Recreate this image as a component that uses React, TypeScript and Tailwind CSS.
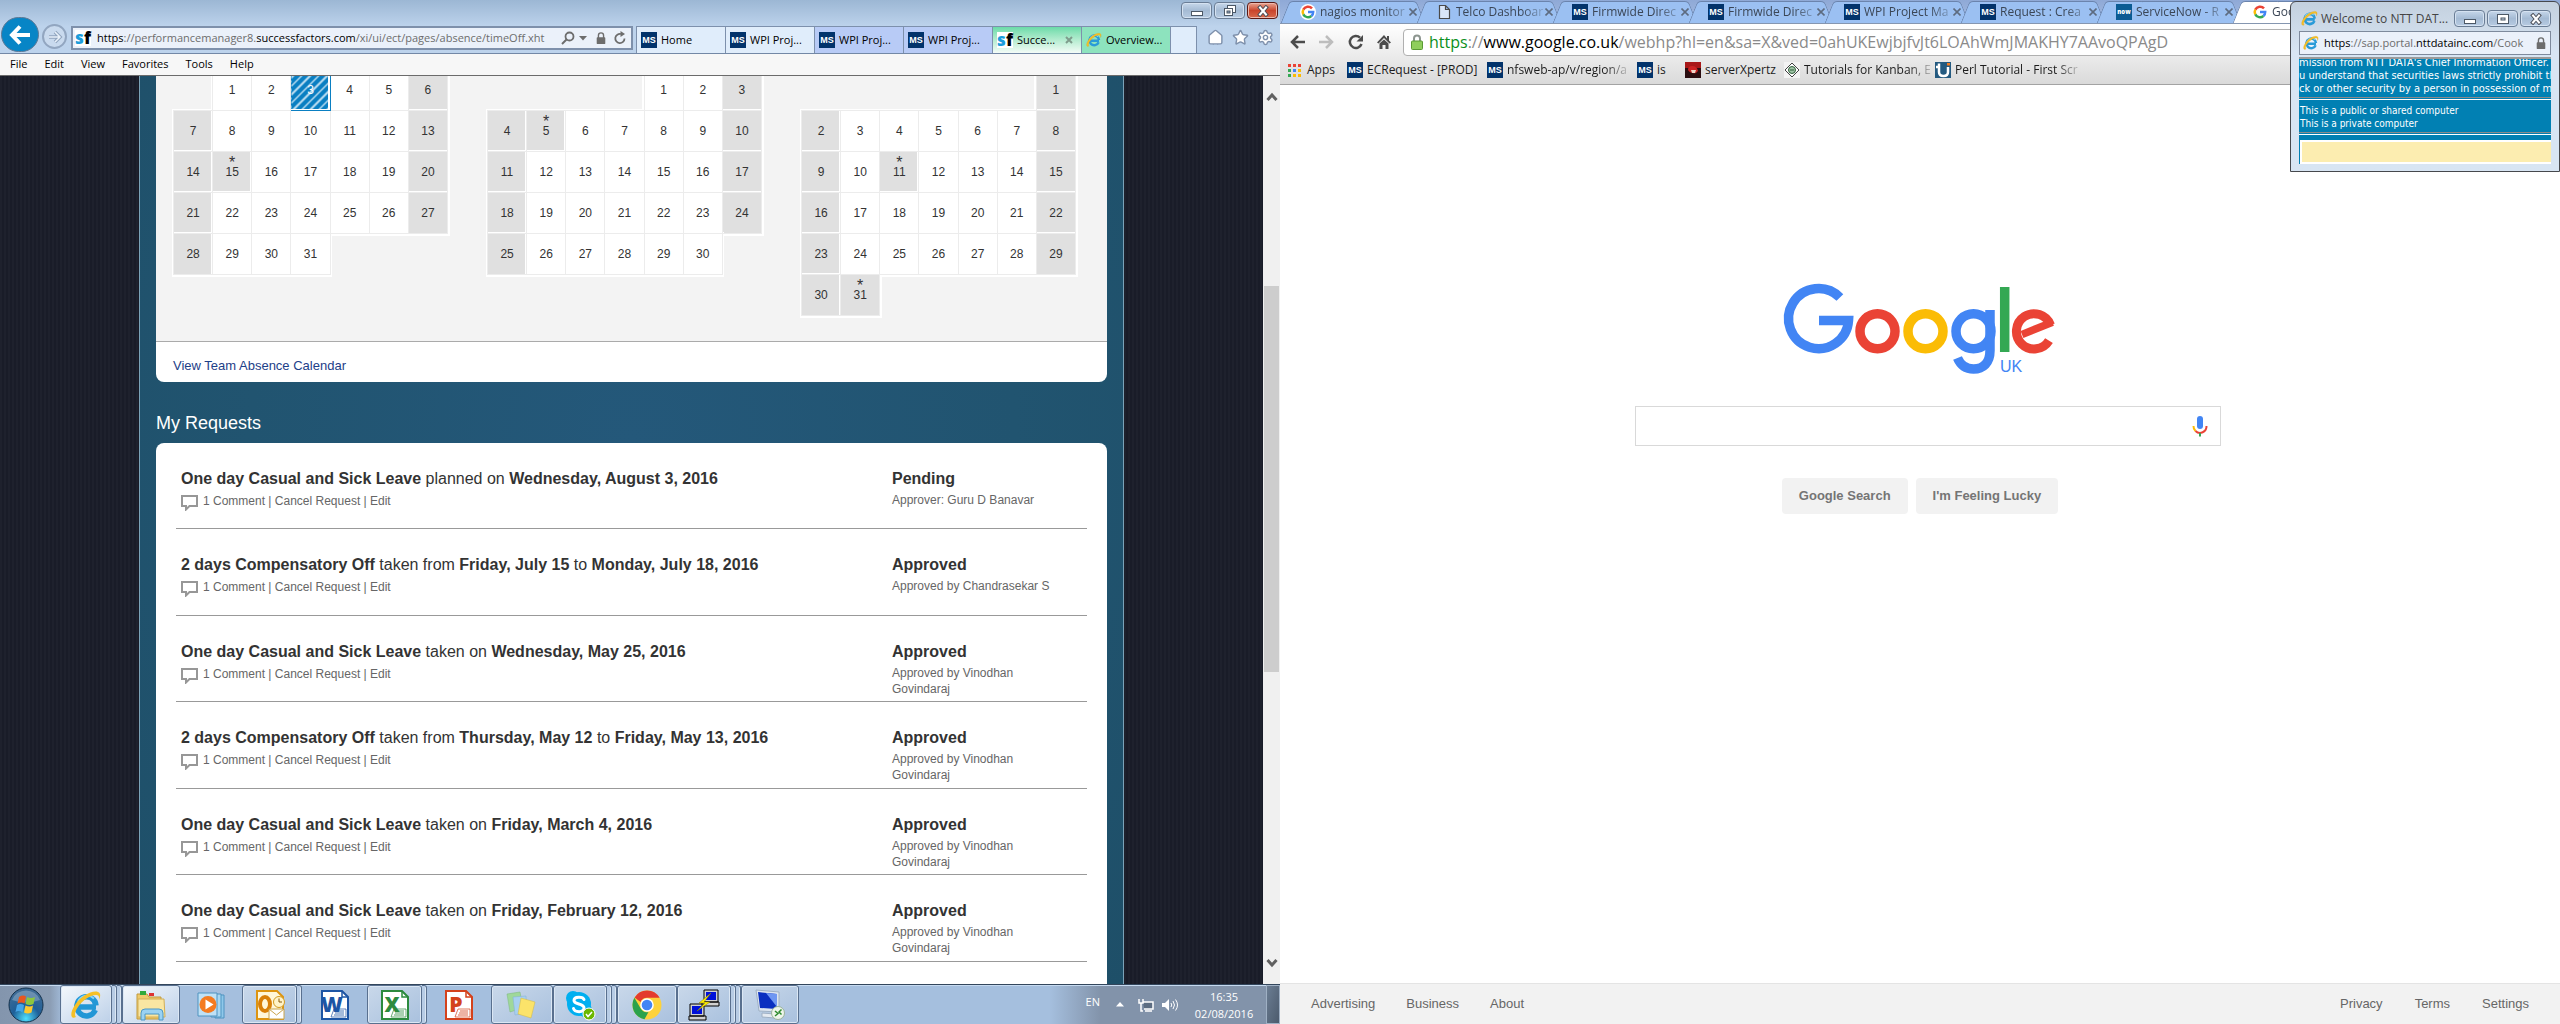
import React from "react";
import { Home, Settings, Star } from "lucide-react";

const UI = "font-['Open_Sans','Noto_Sans',sans-serif]";

/* ---------- shared icons ---------- */

function IeIcon({ className }: { className: string }) {
  return (
    <svg viewBox="0 0 32 32" className={className} aria-hidden="true">
      <path d="M26 17.5H9.5M25.3 20.5A9.6 9.6 0 1 1 26 16" fill="none" stroke="#2a9bd8" strokeWidth="5" />
      <path d="M24 9.5A9.6 9.6 0 0 0 7.5 14" fill="none" stroke="#7fd0f5" strokeWidth="2" />
      <path d="M6 28C1 31-1 25 5 16 11 7 22 1 28 3c3 1 2.500 5 1 8 .5-3 0-5-3-5C20 6 12 12 8 18c-3 4.500-4 8-2 10z" fill="#f6c026" stroke="#d99a12" strokeWidth=".5" />
    </svg>
  );
}

function MsIcon() {
  return (
    <span className="flex size-4 shrink-0 items-center justify-center bg-[#02336b] font-['Liberation_Sans',sans-serif] text-[9px] leading-none font-bold text-white">
      MS
    </span>
  );
}

function SfIcon() {
  return (
    <span className="flex size-4 shrink-0 items-center justify-center bg-white font-['Open_Sans',sans-serif] text-[17px] leading-4 font-extrabold">
      <span className="text-[#1b9ddb]">s</span>
      <span className="text-black">f</span>
    </span>
  );
}

function GIcon() {
  return (
    <svg viewBox="0 0 16 16" className="size-4 shrink-0 rounded-full bg-white" aria-hidden="true">
      <g fill="none" strokeWidth="2.500">
        <path d="M12 4.400A5.300 5.300 0 0 0 3.300 5.600" stroke="#ea4335" />
        <path d="M3.300 5.600a5.300 5.300 0 0 0 0 4.800" stroke="#fbbc05" />
        <path d="M3.300 10.400A5.300 5.300 0 0 0 11.400 12" stroke="#34a853" />
        <path d="M11.400 12A5.300 5.300 0 0 0 13.200 8H8" stroke="#4285f4" />
      </g>
    </svg>
  );
}

function LockIcon({ className }: { className: string }) {
  return (
    <svg viewBox="0 0 12 14" className={className} aria-hidden="true">
      <path d="M3 7V4a3 3 0 0 1 6 0v3" fill="none" stroke="currentColor" strokeWidth="1.600" />
      <rect x="1" y="6" width="10" height="8" rx="1" fill="currentColor" />
    </svg>
  );
}

/* ---------- Internet Explorer ---------- */

function WindowButton({ label, danger, children }: { label: string; danger?: boolean; children: React.ReactNode }) {
  return (
    <button
      aria-label={label}
      className={
        danger
          ? "flex h-[17px] w-[31px] items-center justify-center rounded-sm border border-[#5b1a14] bg-linear-to-b from-[#e8a491] via-[#c9452c] to-[#d8684a] shadow-[inset_0_0_0_1px_#eeb9ac]"
          : "flex h-[17px] w-[31px] items-center justify-center rounded-sm border border-[#6a7d95] bg-linear-to-b from-[#c6d7ea] via-[#a5bbd4] to-[#b7cbe2] shadow-[inset_0_0_0_1px_#d5e2f1]"
      }
    >
      <svg viewBox="0 0 14 12" className="h-3 w-3.5" aria-hidden="true">
        {children}
      </svg>
    </button>
  );
}

const minimizeGlyph = <rect x="1.500" y="6.500" width="11" height="4" fill="#fff" stroke="#4c5866" />;
const restoreGlyph = (
  <g fill="#fff" stroke="#4c5866">
    <rect x="4.500" y=".5" width="8" height="7" />
    <rect x="1.500" y="3.500" width="8" height="7" />
    <rect x="4" y="6" width="3" height="2" fill="#8fa5bf" />
  </g>
);
const maximizeGlyph = (
  <g fill="#fff" stroke="#4c5866">
    <rect x="1.500" y="1.500" width="11" height="9" />
    <rect x="5" y="5" width="4" height="2" fill="#c9d6e6" />
  </g>
);
const closeGlyph = (
  <g strokeLinecap="square">
    <path d="M4 2.500 10 9.500M10 2.500 4 9.500" stroke="#4c4f58" strokeWidth="4" />
    <path d="M4 2.500 10 9.500M10 2.500 4 9.500" stroke="#fff" strokeWidth="2" />
  </g>
);

function IeTab({ icon, label, tone, closable }: { icon: React.ReactNode; label: string; tone: string; closable?: boolean }) {
  return (
    <button className={`flex w-[89px] shrink-0 items-center gap-1 border-r border-[#7d90ac] pl-1 text-[11px] whitespace-nowrap text-black ${tone}`}>
      {icon}
      <span>{label}</span>
      {closable && (
        <svg viewBox="0 0 8 8" className="ml-1.5 size-2" aria-hidden="true">
          <path d="M1 1l6 6M7 1 1 7" stroke="#7f9c8c" strokeWidth="2" />
        </svg>
      )}
    </button>
  );
}

function IeChrome() {
  return (
    <header className={`${UI} shrink-0`}>
      <div className="flex h-[54px] border-b border-[#7388a6] bg-linear-to-b from-[#9cb7d4] to-[#bdd3ec] to-50%">
        <div className="flex items-end pb-[1px] pl-[1px]">
          <button aria-label="Back" className="flex h-[35px] w-[38px] items-center justify-center rounded-full border border-[#5f7a96] bg-[#0785c6]">
            <svg viewBox="0 0 22 22" className="size-[22px]" aria-hidden="true">
              <path d="M21 11H3M11 2.500 3 11l8 8.500" fill="none" stroke="#fff" strokeWidth="4" />
            </svg>
          </button>
          <button aria-label="Forward" className="mb-[3px] ml-[3px] flex size-[25px] items-center justify-center rounded-full border-2 border-[#92a6c0] bg-[#c9daee]">
            <svg viewBox="0 0 16 16" className="size-4" aria-hidden="true">
              <path d="M2 8h10M8 3l5 5-5 5" fill="none" stroke="#8fa3bd" strokeWidth="3.500" />
              <path d="M2 8h10M8 3l5 5-5 5" fill="none" stroke="#e9f1fa" strokeWidth="1.500" />
            </svg>
          </button>
        </div>
        <div className="mt-[26px] ml-1 flex h-6 min-w-0 flex-1 items-center border-2 border-[#7e90ab] bg-[#ebf1fa] pl-0.5 text-[11px] text-[#6d6d6d]">
          <SfIcon />
          <div className="ml-1.5 min-w-0 flex-1 whitespace-nowrap">
            <span className="text-black">https</span>://performancemanager8.<span className="text-black">successfactors.com</span>/xi/ui/ect/pages/absence/timeOff.xht
          </div>
          <svg viewBox="0 0 14 14" className="size-3.5 shrink-0" aria-hidden="true">
            <circle cx="8.500" cy="5.500" r="4" fill="none" stroke="#6d6d6d" strokeWidth="1.800" />
            <path d="M5.500 8.500 1 13" stroke="#6d6d6d" strokeWidth="2" />
          </svg>
          <svg viewBox="0 0 8 5" className="ml-1 h-[5px] w-2 shrink-0" aria-hidden="true">
            <path d="M0 0h8L4 4.500z" fill="#6d6d6d" />
          </svg>
          <LockIcon className="ml-2 size-3 shrink-0 text-[#6d6d6d]" />
          <svg viewBox="0 0 14 14" className="mr-1 ml-1.5 size-3.5 shrink-0" aria-hidden="true">
            <path d="M11.500 7.500A4.600 4.600 0 1 1 8 3" fill="none" stroke="#6d6d6d" strokeWidth="1.800" />
            <path d="M7.500 0 12 3 7.500 6z" fill="#6d6d6d" />
          </svg>
        </div>
        <nav className="mt-[26px] ml-[3px] flex border-t border-l border-[#7d90ac]">
          <IeTab icon={<MsIcon />} label="Home" tone="bg-[#e0edfb]" />
          <IeTab icon={<MsIcon />} label="WPI Proj..." tone="bg-[#e0edfb]" />
          <IeTab icon={<MsIcon />} label="WPI Proj..." tone="bg-[#b8cbf6]" />
          <IeTab icon={<MsIcon />} label="WPI Proj..." tone="bg-[#b8cbf6]" />
          <IeTab icon={<SfIcon />} label="Succe..." tone="bg-linear-to-b from-[#69dba9] to-[#f4fcf8]" closable />
          <IeTab icon={<IeIcon className="size-4 shrink-0" />} label="Overview..." tone="bg-[#8de3be]" />
          <button aria-label="New tab" className="w-[26px] border-r border-[#7d90ac] bg-[#e0edfb]" />
        </nav>
        <div className="flex w-[83px] flex-col items-end justify-between pt-[2px] pr-[2px]">
          <div className="-ml-4 flex gap-[2px]">
            <WindowButton label="Minimize">{minimizeGlyph}</WindowButton>
            <WindowButton label="Restore">{restoreGlyph}</WindowButton>
            <WindowButton label="Close" danger>{closeGlyph}</WindowButton>
          </div>
          <div className="mb-[7px] flex gap-2 pr-1 text-[#7e90ab]">
            <button aria-label="Home"><Home className="size-[17px] fill-white" strokeWidth={2} /></button>
            <button aria-label="Favorites"><Star className="size-[17px] fill-white" strokeWidth={2} /></button>
            <button aria-label="Tools"><Settings className="size-[17px] fill-white" strokeWidth={2} /></button>
          </div>
        </div>
      </div>
      <nav className="flex h-[22px] items-center gap-[17px] border-b border-[#6b6b6b] bg-[#f7f7f7] pl-2.5 text-[11px] text-black">
        {["File", "Edit", "View", "Favorites", "Tools", "Help"].map((item) => (
          <button key={item}>{item}</button>
        ))}
      </nav>
    </header>
  );
}

/* ---------- absence calendar ---------- */

type Month = { offset: number; days: number; holidays: number[]; selected?: number };

const months: Month[] = [
  { offset: 1, days: 31, holidays: [15], selected: 3 },
  { offset: 4, days: 30, holidays: [5] },
  { offset: 6, days: 31, holidays: [11, 31] },
];

function Calendar({ month }: { month: Month }) {
  const weeks = Math.ceil((month.offset + month.days) / 7);
  return (
    <table className="w-[275px] table-fixed border-collapse text-center text-xs text-[#333]">
      <tbody>
        {Array.from({ length: weeks }, (_, week) => (
          <tr key={week} className="h-[41px]">
            {Array.from({ length: 7 }, (_, col) => {
              const day = week * 7 + col - month.offset + 1;
              if (day < 1 || day > month.days) return <td key={col} className="p-0" />;
              const holiday = month.holidays.includes(day);
              if (day === month.selected) {
                return (
                  <td key={col} className="border border-[#0a7fc2] bg-[repeating-linear-gradient(135deg,#0a7fc2_0_4px,#b9dcf0_4px_6px)] p-0 text-white">
                    {day}
                  </td>
                );
              }
              const grey = holiday || col === 0 || col === 6;
              return (
                <td key={col} className={`border border-[#ececec] p-0 shadow-[0_0_0_2px_white] ${grey ? "bg-[#e0e0e0]" : "bg-white"}`}>
                  <span className="relative">
                    {holiday && <span className="absolute -top-2.5 left-1/2 -translate-x-1/2 text-base leading-none">*</span>}
                    {day}
                  </span>
                </td>
              );
            })}
          </tr>
        ))}
      </tbody>
    </table>
  );
}

/* ---------- requests ---------- */

type Request = { kind: string; verb: string; from: string; to?: string; status: string; approver: string };

const requests: Request[] = [
  { kind: "One day Casual and Sick Leave", verb: "planned on", from: "Wednesday, August 3, 2016", status: "Pending", approver: "Approver: Guru D Banavar" },
  { kind: "2 days Compensatory Off", verb: "taken from", from: "Friday, July 15", to: "Monday, July 18, 2016", status: "Approved", approver: "Approved by Chandrasekar S" },
  { kind: "One day Casual and Sick Leave", verb: "taken on", from: "Wednesday, May 25, 2016", status: "Approved", approver: "Approved by Vinodhan Govindaraj" },
  { kind: "2 days Compensatory Off", verb: "taken from", from: "Thursday, May 12", to: "Friday, May 13, 2016", status: "Approved", approver: "Approved by Vinodhan Govindaraj" },
  { kind: "One day Casual and Sick Leave", verb: "taken on", from: "Friday, March 4, 2016", status: "Approved", approver: "Approved by Vinodhan Govindaraj" },
  { kind: "One day Casual and Sick Leave", verb: "taken on", from: "Friday, February 12, 2016", status: "Approved", approver: "Approved by Vinodhan Govindaraj" },
];

function RequestRow({ request }: { request: Request }) {
  return (
    <li className="flex border-b border-[#999] pt-[26px] pl-[5px] text-[#333]">
      <div className="min-w-0 flex-1">
        <h3 className="text-base leading-5">
          <b>{request.kind}</b> {request.verb} <b>{request.from}</b>
          {request.to && (
            <>
              {" "}to <b>{request.to}</b>
            </>
          )}
        </h3>
        <p className="mt-1 flex text-xs leading-4 text-[#666]">
          <svg viewBox="0 0 17 16" className="mt-0.5 mr-[5px] h-4 w-[17px]" aria-hidden="true">
            <path d="M1 1h15v10H8.500L5 14.500V11H1z" fill="none" stroke="#979797" strokeWidth="2" />
          </svg>
          <span>
            <a href="#comment">1 Comment</a> | <a href="#cancel">Cancel Request</a> | <a href="#edit">Edit</a>
          </span>
        </p>
      </div>
      <div className="w-[195px] pr-8">
        <p className="text-base leading-5 font-bold">{request.status}</p>
        <p className="mt-[3px] text-xs leading-4 text-[#666]">{request.approver}</p>
      </div>
    </li>
  );
}

function AbsencePage() {
  return (
    <div className="flex min-h-0 flex-1 font-['Liberation_Sans',Arial,sans-serif]">
      <main className="flex min-w-0 flex-1 overflow-hidden bg-[#191c28] bg-[repeating-linear-gradient(90deg,#ffffff06_0_2px,transparent_2px_4px)] px-[139px]">
        <div className="flex min-w-0 flex-1 flex-col border-x border-[#7ba3b8] bg-[radial-gradient(ellipse_at_50%_40%,#24587a_0%,#215470_55%,#1e4f68_100%)] px-4">
          <section className="shrink-0 overflow-hidden rounded-b-lg bg-white">
            <div className="flow-root h-[266px] border-b border-[#aaa] bg-[#f3f3f3]">
              <div className="-mt-[7px] flex items-start justify-between pr-[31px] pl-[17px]">
                {months.map((month) => (
                  <Calendar key={month.offset} month={month} />
                ))}
              </div>
            </div>
            <div className="flex h-10 items-center pt-2 pl-[17px] text-[13px] text-[#1d4088]">
              <a href="#team">View Team Absence Calendar</a>
            </div>
          </section>
          <h2 className="mt-[29px] shrink-0 text-lg leading-6 text-white">My Requests</h2>
          <ul className="mt-2 grid min-h-0 flex-1 auto-rows-[86px_87px] content-start rounded-t-lg bg-white px-5">
            {requests.map((request) => (
              <RequestRow key={request.from} request={request} />
            ))}
          </ul>
        </div>
      </main>
      <div className="flex w-[17px] shrink-0 flex-col items-center bg-[#f0f0f0] pt-4 pb-4" aria-hidden="true">
        <svg viewBox="0 0 12 10" className="h-2.5 w-3">
          <path d="M1.500 8 6 3l4.500 5" fill="none" stroke="#606060" strokeWidth="3" />
        </svg>
        <div className="mt-[184px] h-[386px] w-[15px] bg-[#cdcdcd]" />
        <svg viewBox="0 0 12 10" className="mt-auto h-2.5 w-3">
          <path d="M1.500 2 6 7l4.500-5" fill="none" stroke="#606060" strokeWidth="3" />
        </svg>
      </div>
    </div>
  );
}

/* ---------- taskbar ---------- */

function TaskButton({ label, width, open, stack = 0, active, children }: { label: string; width: string; open?: boolean; stack?: number; active?: boolean; children: React.ReactNode }) {
  return (
    <div className="flex">
      <button
        aria-label={label}
        className={`flex items-center justify-center ${width} ${
          open
            ? `rounded-[3px] border border-[#59708f] shadow-[inset_0_0_0_1px_#dbe7f4] ${active ? "bg-linear-to-br from-[#f4f8fc] to-[#bcd0e8]" : "bg-linear-to-br from-[#c9d8ea] to-[#a9c1de]"}`
            : ""
        }`}
      >
        <svg viewBox="0 0 32 32" className="size-8" aria-hidden="true">
          {children}
        </svg>
      </button>
      {Array.from({ length: stack }, (_, i) => (
        <span key={i} className="w-[5px] rounded-r-[3px] border-y border-r border-[#59708f] bg-[#b7cce5] shadow-[inset_-1px_0_0_#dbe7f4]" />
      ))}
    </div>
  );
}

function OfficeIcon({ color, letter }: { color: string; letter: string }) {
  return (
    <>
      <path d="M3 2h20l6 6v22H3z" fill="#fff" stroke={color} strokeWidth="2" />
      <path d="M23 2v6h6" fill="none" stroke={color} strokeWidth="1.500" />
      <path d="M15 20h12v8H12z" fill="#fdfdfd" stroke={color} strokeWidth=".7" />
      <path d="M17 22h8M16 24h9M15 26h10" stroke={color} strokeWidth=".8" />
      <text x="13" y="23" textAnchor="middle" fontSize="21" fontWeight="800" fontFamily="Open Sans" fill={color}>{letter}</text>
    </>
  );
}

function Taskbar() {
  return (
    <footer className={`${UI} flex h-10 shrink-0 border-t border-[#33465c] bg-[linear-gradient(90deg,#8395ad_0,#8b9db4_50px,#a5bfde_64px,#a5bfde_82%,#8293aa_86%)] shadow-[inset_0_1px_0_#c6daf0]`}>
      <button aria-label="Start" className="flex w-[60px] items-center pl-2">
        <svg viewBox="0 0 36 36" className="size-9" aria-hidden="true">
          <defs>
            <radialGradient id="orb" cx="50%" cy="90%" r="80%">
              <stop offset="0" stopColor="#4fe0ff" />
              <stop offset=".5" stopColor="#1e5f98" />
              <stop offset="1" stopColor="#3d6b96" />
            </radialGradient>
          </defs>
          <circle cx="18" cy="18" r="17" fill="url(#orb)" stroke="#16324c" />
          <path d="M4 13A15 15 0 0 1 32 13Q18 18 4 13z" fill="#ffffff40" />
          <path d="M11 10q4-2.500 7-.5l-1.500 7q-3.500-2-7 0z" fill="#e8571f" />
          <path d="M19 10q4 2 8 0l-1.500 7q-4 2-8 0z" fill="#8cc63e" />
          <path d="M9 18q3.500-2 7 0l-1.500 7.500q-3.500-2.500-7-.5z" fill="#45a5e8" />
          <path d="M17.500 18.500q4 2 7.500 0l-1.500 7q-4 2-7.500 0z" fill="#fdc82f" />
        </svg>
      </button>
      <TaskButton label="Internet Explorer" width="w-[52px]" open stack={2} active>
        <path d="M26 18H9.500M25.300 21A9.600 9.600 0 1 1 26 16.500" fill="none" stroke="#2397d6" strokeWidth="5.500" />
        <path d="M24 9.500A10 10 0 0 0 8 13" fill="none" stroke="#8ad5f8" strokeWidth="2" />
        <path d="M6 28C1 31-1 25 5 16 11 7 22 1 28 3c3 1 2.500 5 1 8 .5-3 0-5-3-5C20 6 12 12 8 18c-3 4.500-4 8-2 10z" fill="#f6c026" />
      </TaskButton>
      <TaskButton label="File Explorer" width="w-[58px]" open active>
        <path d="M2 5h10l2 3h12v22H2z" fill="#eecb6c" stroke="#c19a3c" />
        <path d="M5 2h6v4H5z" fill="#2faa3c" />
        <path d="M14 4h5v3h-5z" fill="#d33" />
        <path d="M3 10h26l1 18H3z" fill="#f9e6a2" stroke="#d2ae56" />
        <path d="M6 31v-7q0-4 4-4h14q4 0 4 4v7h-4v-6H10v6z" fill="#9ad2f2" stroke="#4d98c6" />
      </TaskButton>
      <TaskButton label="Media Player" width="w-[62px]">
        <path d="M20 6h9v23h-9z" fill="#8fc8ea" stroke="#4f93c0" />
        <path d="M16 5h10v23H16z" fill="#a9d7f1" stroke="#4f93c0" />
        <path d="M3 4h19v23H3z" fill="#bfe1f5" stroke="#4f93c0" />
        <circle cx="13" cy="15.500" r="8.500" fill="#f47b20" />
        <path d="M10.500 10.500v10l8-5z" fill="#fff" />
      </TaskButton>
      <TaskButton label="Outlook" width="w-[55px]" open stack={1}>
        <path d="M3 2h20l6 6v22H3z" fill="#fff6d8" stroke="#dd9410" strokeWidth="2" />
        <ellipse cx="11" cy="15" rx="5" ry="7" fill="none" stroke="#d97f08" strokeWidth="4" />
        <path d="M15 20h15v10H15z" fill="#fff" stroke="#c9a44d" />
        <path d="M15 20l7.500 6 7.500-6" fill="none" stroke="#c9a44d" />
        <circle cx="25" cy="13" r="5.500" fill="#fff3c8" stroke="#d29a22" />
        <path d="M25 9.500V13h3" fill="none" stroke="#8b5a0a" />
      </TaskButton>
      <TaskButton label="Word" width="w-[65px]">
        <OfficeIcon color="#1c55a4" letter="W" />
      </TaskButton>
      <TaskButton label="Excel" width="w-[55px]" open stack={1}>
        <OfficeIcon color="#2c8a3e" letter="X" />
      </TaskButton>
      <TaskButton label="PowerPoint" width="w-[64px]">
        <OfficeIcon color="#d4421c" letter="P" />
      </TaskButton>
      <TaskButton label="Sticky Notes" width="w-[62px]" open>
        <path d="M1 5l13-2 3 16-13 4z" fill="#9fd89a" stroke="#7cb87a" strokeWidth=".5" />
        <path d="M7 8l13-1 1 17-12 2z" fill="#a8d0f0" stroke="#83afd3" strokeWidth=".5" />
        <path d="M15 9l14 4-4 16-13-4z" fill="#fbe36a" stroke="#d3b840" strokeWidth=".5" />
      </TaskButton>
      <TaskButton label="Skype" width="w-[54px]" open stack={2}>
        <g fill="#00aff0">
          <circle cx="15" cy="15" r="12" />
          <circle cx="9" cy="9" r="7" />
          <circle cx="21" cy="21" r="7" />
        </g>
        <path d="M20 10.500C19 7.500 10 7 10 11.500s10 2.500 10 7.500-9.500 4.500-10.500.5" fill="none" stroke="#fff" strokeWidth="3" strokeLinecap="round" />
        <circle cx="25" cy="25" r="6" fill="#6bb700" stroke="#fff" />
        <path d="M22 25l2 2.500 4-4.500" fill="none" stroke="#fff" strokeWidth="1.500" />
      </TaskButton>
      <TaskButton label="Chrome" width="w-[60px]" open>
        <circle cx="16" cy="16" r="14.500" fill="#fdd23b" />
        <path d="M16 1.500A14.500 14.500 0 0 1 28.600 8.800H16A7.200 7.200 0 0 0 9.500 13L3.600 8.500A14.500 14.500 0 0 1 16 1.500z" fill="#e33b2e" />
        <path d="M3.400 8.800 9.700 19.600A7.200 7.200 0 0 0 17.500 23L13.500 30.300A14.500 14.500 0 0 1 3.400 8.800z" fill="#2ba24c" />
        <circle cx="16" cy="16" r="6.800" fill="#fff" />
        <circle cx="16" cy="16" r="5.300" fill="#4285f4" />
      </TaskButton>
      <TaskButton label="PuTTY" width="w-[54px]" open stack={2}>
        <g fill="#d0d0d0" stroke="#000">
          <path d="M16 1h14v12H16zM14 13h17v4H14zM2 15h14v12H2zM1 27h17v4H1z" />
        </g>
        <path d="M18 3h10v8H18zM4 17h10v8H4z" fill="#0010d8" />
        <path d="M23 4l-12 10h6L9 22l13-9h-6z" fill="#ffef00" stroke="#8a7f00" strokeWidth=".5" />
      </TaskButton>
      <TaskButton label="Remote Desktop" width="w-[58px]" open>
        <path d="M2 1l23 2v20L5 22z" fill="#dde6f0" stroke="#9fb0c4" />
        <path d="M4 3l19 2v15L6 19z" fill="#0a2fc0" />
        <path d="M12 4l11 1v13z" fill="#6f97f2" />
        <path d="M8 24l13 1v4L8 28z" fill="#e4eaf1" stroke="#9fb0c4" />
        <circle cx="24" cy="24" r="6.500" fill="#eef5ea" stroke="#9ab39a" />
        <path d="M21 22l3 2.500-3 2.500M27.500 20.500 25 23l2.500 2.500" fill="none" stroke="#2e8b2e" strokeWidth="1.500" />
      </TaskButton>
      <div className="ml-auto flex items-center text-[11px] leading-[17px] text-white">
        <span className="pb-1.5">EN</span>
        <svg viewBox="0 0 8 5" className="ml-4 h-[5px] w-2" aria-hidden="true">
          <path d="M4 0l4 4.500H0z" fill="#fff" />
        </svg>
        <svg viewBox="0 0 16 14" className="ml-3.5 h-3.5 w-4" aria-hidden="true">
          <path d="M5 4h10v7H6" fill="#5d6d82" stroke="#fff" strokeWidth="1.500" />
          <path d="M1 1v4h4V1M3 5v8h2M7 13h7" fill="none" stroke="#fff" strokeWidth="1.500" />
        </svg>
        <svg viewBox="0 0 16 14" className="ml-2 h-3.5 w-4" aria-hidden="true">
          <path d="M0 5h3l4-4v12L3 9H0z" fill="#fff" />
          <path d="M9 5q1.500 2 0 4M11 3q3 4 0 8M13.500 1.500q4 5.500 0 11" fill="none" stroke="#fff" />
        </svg>
        <div className="ml-3.5 w-[64px] text-center">
          <div>16:35</div>
          <div>02/08/2016</div>
        </div>
        <button aria-label="Show desktop" className="ml-2.5 h-full w-[14px] border border-[#9fb0c4] bg-linear-to-br from-[#6b7d93] to-[#4c5b6d]" />
      </div>
    </footer>
  );
}

/* ---------- Chrome ---------- */

const FADE = "[mask-image:linear-gradient(90deg,#000_75%,#0003)]";

function PageIcon() {
  return (
    <svg viewBox="0 0 16 16" className="size-4 shrink-0" aria-hidden="true">
      <path d="M3.500 1.500h6l4 4v9h-10zM9.500 1.500v4h4" fill="#d9e6f8" stroke="#4a4a4a" strokeWidth="1.200" />
    </svg>
  );
}

function NowIcon() {
  return (
    <span className="flex size-4 shrink-0 items-center justify-center bg-[#0b5b93] text-[6px] leading-none font-extrabold text-white">now</span>
  );
}

function ChromeTab({ icon, label, active }: { icon: React.ReactNode; label: string; active?: boolean }) {
  return (
    <div
      className={`relative isolate flex w-[136px] shrink-0 items-center pl-[15px] before:absolute before:inset-y-0 before:left-0 before:-z-10 before:w-2/3 before:-skew-x-[22deg] before:rounded-tl-[4px] before:border-t before:border-l before:border-[#6b84ad] after:absolute after:inset-y-0 after:right-0 after:-z-10 after:w-2/3 after:skew-x-[22deg] after:rounded-tr-[4px] after:border-t after:border-r after:border-[#6b84ad] ${
        active ? "z-10 before:bg-white after:bg-white" : "before:bg-[#9bc0f2] after:bg-[#9bc0f2]"
      }`}
    >
      {icon}
      <button className={`ml-1 w-[88px] text-left text-xs leading-5 whitespace-nowrap text-[#3b4656] ${FADE}`}>{label}</button>
      <button aria-label={`Close ${label}`} className="ml-px">
        <svg viewBox="0 0 8 8" className="size-2" aria-hidden="true">
          <path d="M.5.5l7 7M7.500.5l-7 7" stroke="#5d6b80" strokeWidth="1.600" />
        </svg>
      </button>
    </div>
  );
}

function Bookmark({ icon, label, width, fade }: { icon: React.ReactNode; label: string; width: string; fade?: boolean }) {
  return (
    <a href="#bookmark" className={`flex shrink-0 items-center gap-1 ${width}`}>
      {icon}
      <span className={`whitespace-nowrap ${fade ? "[mask-image:linear-gradient(90deg,#000_82%,#0003)]" : ""}`}>{label}</span>
    </a>
  );
}

function AppsIcon() {
  const colors = ["#ea4335", "#ea4335", "#ea4335", "#34a853", "#4285f4", "#fbbc05", "#34a853", "#fbbc05", "#fbbc05"];
  return (
    <svg viewBox="0 0 13 13" className="mr-0.5 size-[13px] shrink-0" aria-hidden="true">
      {colors.map((c, i) => (
        <rect key={i} x={(i % 3) * 5} y={Math.floor(i / 3) * 5} width="3" height="3" fill={c} />
      ))}
    </svg>
  );
}

function ChromeHeader() {
  return (
    <header className={`${UI} shrink-0 overflow-hidden`}>
      <div className="flex h-6 border-b border-[#8596b0] bg-linear-to-b from-[#8fa9d6] to-[#a4bbe2] pt-px pl-[5px]">
        <ChromeTab icon={<GIcon />} label="nagios monitor" />
        <ChromeTab icon={<PageIcon />} label="Telco Dashboar" />
        <ChromeTab icon={<MsIcon />} label="Firmwide Direc" />
        <ChromeTab icon={<MsIcon />} label="Firmwide Direc" />
        <ChromeTab icon={<MsIcon />} label="WPI Project Ma" />
        <ChromeTab icon={<MsIcon />} label="Request : Crea" />
        <ChromeTab icon={<NowIcon />} label="ServiceNow - R" />
        <ChromeTab icon={<GIcon />} label="Google" active />
      </div>
      <div className="border-b border-[#a3a3a3] bg-linear-to-b from-white to-[#dadada]">
        <div className="flex h-9 items-center pl-2.5 text-[#4c4c4c]">
          <button aria-label="Back">
            <svg viewBox="0 0 16 16" className="size-4" aria-hidden="true"><path d="M15 8H2M8 2 2 8l6 6" fill="none" stroke="#4c4c4c" strokeWidth="2.500" /></svg>
          </button>
          <button aria-label="Forward" className="ml-3">
            <svg viewBox="0 0 16 16" className="size-4" aria-hidden="true"><path d="M1 8h13M8 2l6 6-6 6" fill="none" stroke="#bdbdbd" strokeWidth="2.500" /></svg>
          </button>
          <button aria-label="Reload" className="ml-3.5">
            <svg viewBox="0 0 16 16" className="size-4" aria-hidden="true">
              <path d="M13.500 10A6 6 0 1 1 12 3.600" fill="none" stroke="#4c4c4c" strokeWidth="2.500" />
              <path d="M15 1v6.500H8.500z" fill="#4c4c4c" />
            </svg>
          </button>
          <button aria-label="Home" className="ml-3">
            <svg viewBox="0 0 16 16" className="size-4" aria-hidden="true">
              <path d="M8 1 1 8.500l1.500 1L8 4l5.500 5.500 1.500-1-2-2V2h-2v2.500z" fill="#4c4c4c" />
              <path d="M3.500 9.500 8 5.500l4.500 4V15H9.500v-4h-3v4h-3z" fill="#4c4c4c" />
            </svg>
          </button>
          <div className="ml-[11px] flex h-[27px] flex-1 items-center rounded-l-sm border border-[#b0b0b0] bg-white pl-[7px] text-base text-[#8a8a8a]">
            <svg viewBox="0 0 12 16" className="h-4 w-3" aria-hidden="true">
              <path d="M3 8V4.500a3 3 0 0 1 6 0V8" fill="none" stroke="#8d9690" strokeWidth="2" />
              <rect x=".5" y="7" width="11" height="8.500" rx="1" fill="#8fce5c" stroke="#5a9a34" />
            </svg>
            <span className="ml-1.5 whitespace-nowrap">
              <span className="text-[#0b8f1c]">https</span>://<span className="text-black">www.google.co.uk</span>/webhp?hl=en&amp;sa=X&amp;ved=0ahUKEwjbjfvJt6LOAhWmJMAKHY7AAvoQPAgD
            </span>
          </div>
        </div>
        <nav className="flex h-6 items-center pl-2 pb-1 text-xs text-[#1c1c1c]">
          <Bookmark icon={<AppsIcon />} label="Apps" width="w-[59px]" />
          <Bookmark icon={<MsIcon />} label="ECRequest - [PROD]" width="w-[140px]" />
          <Bookmark icon={<MsIcon />} label="nfsweb-ap/v/region/a" width="w-[150px]" fade />
          <Bookmark icon={<MsIcon />} label="is" width="w-[48px]" />
          <Bookmark
            icon={
              <svg viewBox="0 0 16 16" className="size-4 shrink-0" aria-hidden="true">
                <rect width="16" height="16" fill="#2b0d10" />
                <rect width="16" height="6" fill="#a81818" />
                <path d="M3 8q0-4 4-4 5 0 6 5l-2 2q-5 1-8-3z" fill="#c22" />
                <path d="M6 8h5l-1 3H7z" fill="#f0d5c8" />
              </svg>
            }
            label="serverXpertz"
            width="w-[99px]"
          />
          <Bookmark
            icon={
              <svg viewBox="0 0 16 16" className="size-4 shrink-0 bg-[#f3f3f3]" aria-hidden="true">
                <path d="M8 1l7 7-7 7-7-7z" fill="#fff" stroke="#444" />
                <circle cx="8" cy="8" r="3.500" fill="#9fc5a5" stroke="#2f5d3a" />
                <path d="M6 8h4" stroke="#2f5d3a" />
              </svg>
            }
            label="Tutorials for Kanban, E"
            width="w-[151px]"
            fade
          />
          <Bookmark
            icon={
              <svg viewBox="0 0 16 16" className="size-4 shrink-0" aria-hidden="true">
                <rect width="16" height="16" fill="#245a80" />
                <path d="M1 5h4M4 1.500V10q0 4 4.500 4t4.500-4V5" fill="none" stroke="#fff" strokeWidth="2.500" />
                <rect x="12" y="1" width="3" height="2.500" fill="#f47b20" />
              </svg>
            }
            label="Perl Tutorial - First Scr"
            width="w-[151px]"
            fade
          />
        </nav>
      </div>
    </header>
  );
}

function GoogleLogo() {
  return (
    <svg viewBox="0 0 272 92" className="h-[92px] w-[272px] overflow-visible" role="img" aria-label="Google">
      <g fill="none" strokeWidth="9.500">
        <path d="M55.900 13.500A30 30 0 1 0 64.500 36.500H35" stroke="#4285f4" />
        <circle cx="93.500" cy="47.200" r="17.500" stroke="#ea4335" />
        <circle cx="141.500" cy="47.200" r="17.500" stroke="#fbbc05" />
        <circle cx="189.500" cy="47.200" r="17.500" stroke="#4285f4" />
        <path d="M206 26v40.500C206 79 199 85 189.500 85c-7.500 0-13-4-16-11" stroke="#4285f4" />
        <path d="M220.700 3v65" stroke="#34a853" />
        <path d="M266.500 41.100A17.600 17.600 0 1 0 265 56.600" stroke="#ea4335" strokeWidth="9" />
        <path d="M238 50.400 268.500 38.200" stroke="#ea4335" strokeWidth="7.500" />
      </g>
    </svg>
  );
}

function GooglePage() {
  return (
    <div className="flex min-h-0 flex-1 flex-col bg-white font-['Liberation_Sans',Arial,sans-serif]">
      <main className="flex flex-1 flex-col items-center pt-[199px]">
        <div className="relative">
          <GoogleLogo />
          <span className="absolute top-[75px] left-[216px] text-base leading-4 text-[#4285f4]">UK</span>
        </div>
        <form className="mt-[30px] flex flex-col items-center" onSubmit={(e) => e.preventDefault()}>
          <div className="ml-4 flex h-10 w-[586px] items-center border border-[#d9d9d9] bg-white pr-3">
            <input aria-label="Search" type="text" className="min-w-0 flex-1 px-2 outline-none" />
            <button type="button" aria-label="Search by voice">
              <svg viewBox="0 0 16 22" className="h-[22px] w-4" aria-hidden="true">
                <rect x="5" y="1" width="6" height="13" rx="3" fill="#4285f4" />
                <path d="M1.500 11a6.500 6.500 0 0 0 2 5" fill="none" stroke="#fbbc05" strokeWidth="2" />
                <path d="M3.500 16a6.500 6.500 0 0 0 11-5" fill="none" stroke="#ea4335" strokeWidth="2" />
                <path d="M8 18v3.500" stroke="#34a853" strokeWidth="2" />
              </svg>
            </button>
          </div>
          <div className="mt-8 flex gap-2 text-[13px] font-bold text-[#757575]">
            <button className="h-9 rounded-sm bg-[#f2f2f2] px-[17px]">Google Search</button>
            <button className="h-9 rounded-sm bg-[#f2f2f2] px-[17px]">I'm Feeling Lucky</button>
          </div>
        </form>
      </main>
      <footer className="flex h-[41px] shrink-0 items-center justify-between border-t border-[#e4e4e4] bg-[#f2f2f2] px-[31px] text-[13px] text-[#666]">
        <nav className="flex gap-[31px]">
          <a href="#advertising">Advertising</a>
          <a href="#business">Business</a>
          <a href="#about">About</a>
        </nav>
        <nav className="flex gap-8">
          <a href="#privacy">Privacy</a>
          <a href="#terms">Terms</a>
          <a href="#settings">Settings</a>
        </nav>
      </footer>
    </div>
  );
}

/* ---------- popup ---------- */

function Popup() {
  return (
    <section className={`${UI} absolute top-px right-0 z-20 flex w-[270px] flex-col rounded-t-md border border-[#46484d] bg-linear-to-b from-[#c3d0de] to-[#d8e5f3] to-30% px-2 pb-[7px]`}>
      <div className="flex h-[29px] items-center pt-1 text-xs text-[#444]">
        <IeIcon className="ml-0.5 size-[17px] shrink-0" />
        <span className="ml-[3px] flex-1 whitespace-nowrap">Welcome to NTT DAT...</span>
        <div className="flex gap-[2px]">
          <WindowButton label="Minimize popup">{minimizeGlyph}</WindowButton>
          <WindowButton label="Maximize popup">{maximizeGlyph}</WindowButton>
          <WindowButton label="Close popup">{closeGlyph}</WindowButton>
        </div>
      </div>
      <div className="flex h-6 items-center border border-[#7e8a9c] bg-[#ebf1fa] px-[3px] text-[11px] text-[#6d6d6d]">
        <IeIcon className="size-4 shrink-0" />
        <span className="ml-[5px] flex-1 whitespace-nowrap">
          <span className="text-black">https</span>://sap.portal.<span className="text-black">nttdatainc.com</span>/Cook
        </span>
        <LockIcon className="size-3 shrink-0 text-[#6d6d6d]" />
      </div>
      <div className="mt-[2px] overflow-hidden border-t-2 border-[#9a9a9a] bg-[#0180b3] font-['DejaVu_Sans_Condensed','Liberation_Sans',sans-serif] text-[10px] leading-[13px] whitespace-nowrap text-white">
        <div className="-mt-[3px] text-[11px]">
          <p>mission from NTT DATA's Chief Information Officer.</p>
          <p>u understand that securities laws strictly prohibit the</p>
          <p>ck or other security by a person in possession of ma</p>
        </div>
        <hr className="mt-[2px] mb-1 h-[3px] border-t border-b border-t-[#8a8a8a] border-b-white" />
        <p className="pl-px">This is a public or shared computer</p>
        <p className="pl-px">This is a private computer</p>
        <hr className="mt-[2px] h-[3px] border-t border-b border-t-[#8a8a8a] border-b-white" />
        <div className="mt-[5px] ml-px h-6 border-2 border-r-0 border-white bg-[#fcedb0]" />
      </div>
    </section>
  );
}

export default function App() {
  return (
    <div className="relative flex h-screen w-full overflow-hidden bg-white">
      <div className="flex w-1/2 min-w-0 flex-col">
        <IeChrome />
        <AbsencePage />
        <Taskbar />
      </div>
      <div className="flex w-1/2 min-w-0 flex-col">
        <ChromeHeader />
        <GooglePage />
      </div>
      <Popup />
    </div>
  );
}
